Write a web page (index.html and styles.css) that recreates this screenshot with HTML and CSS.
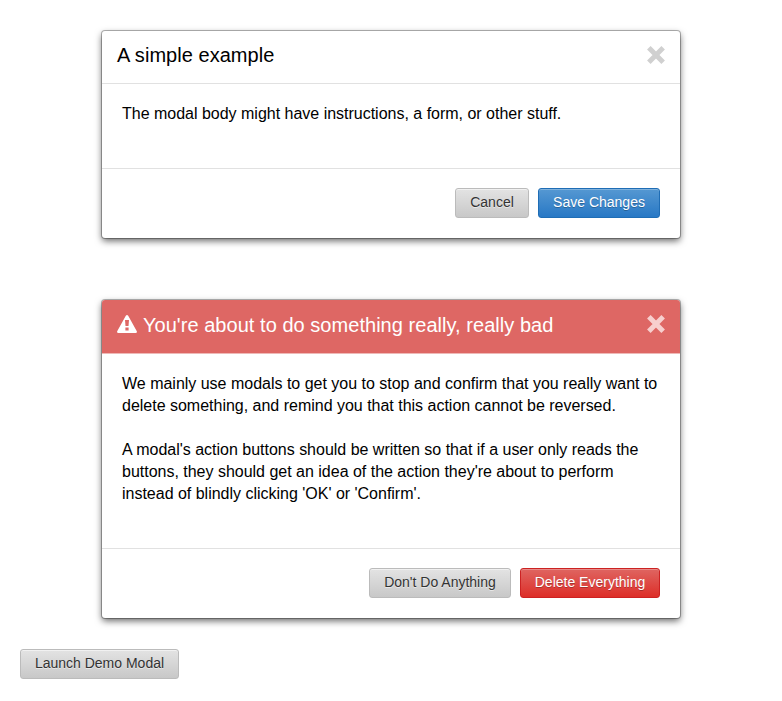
FILE: index.html
```
<!DOCTYPE html>
<html lang="en">
<head>
<meta charset="utf-8">
<title>Modals</title>
<link rel="stylesheet" href="styles.css">
</head>
<body>
<section class="modal">
  <header class="modal-header">
    <h2 class="title">A simple example</h2>
    <svg class="close" viewBox="0 0 18 18"><path d="M3.6 3.6L14.4 14.4M14.4 3.6L3.6 14.4"/></svg>
  </header>
  <div class="modal-body">
    <p>The modal body might have instructions, a form, or other stuff.</p>
  </div>
  <footer class="modal-footer">
    <button class="btn cancel">Cancel</button>
    <button class="btn primary">Save Changes</button>
  </footer>
</section>
<section class="modal danger">
  <header class="modal-header">
    <svg class="warning" viewBox="0 0 20 18"><path fill-rule="evenodd" d="M8.8.7Q10 -.6 11.2.7L19.8 16.3Q20.3 18 18.6 18H1.4Q-.3 18 .2 16.3ZM8 5L8.5 11H11.5L12 5ZM8.4 12.6V15.4H11.6V12.6Z"/></svg>
    <h2 class="title">You're about to do something really, really bad</h2>
    <svg class="close" viewBox="0 0 18 18"><path d="M3.6 3.6L14.4 14.4M14.4 3.6L3.6 14.4"/></svg>
  </header>
  <div class="modal-body">
    <p>We mainly use modals to get you to stop and confirm that you really want to<br>delete something, and remind you that this action cannot be reversed.</p>
    <p>A modal's action buttons should be written so that if a user only reads the<br>buttons, they should get an idea of the action they're about to perform<br>instead of blindly clicking 'OK' or 'Confirm'.</p>
  </div>
  <footer class="modal-footer">
    <button class="btn keep">Don't Do Anything</button>
    <button class="btn delete">Delete Everything</button>
  </footer>
</section>
<button class="btn launch">Launch Demo Modal</button>
</body>
</html>
```
FILE: styles.css
```
* { box-sizing: border-box; }
body {
  margin: 0;
  padding: 31px 20px 0;
  background: #fff;
  color: #000;
  font-family: "Liberation Sans", Arial, sans-serif;
}
.modal {
  width: 578px;
  margin: 0 0 62px 82px;
  background: #fff;
  border-radius: 3px;
  box-shadow: 0 0 0 1px rgba(0, 0, 0, .28), 0 3px 7px rgba(0, 0, 0, .6);
}
.modal-header {
  display: flex;
  align-items: center;
  height: 53px;
  padding: 0 15px 4px;
  border-bottom: 1px solid #e1e1e1;
  border-radius: 3px 3px 0 0;
}
.title {
  margin: 0;
  font-size: 20px;
  line-height: 24px;
  font-weight: 400;
  letter-spacing: .04px;
  white-space: nowrap;
}
.close {
  width: 18px;
  height: 18px;
  margin-left: auto;
  overflow: visible;
  stroke: #d0d0d0;
  stroke-width: 5;
  stroke-linecap: square;
}
.modal-body {
  height: 84px;
  padding: 19px 20px 0;
  font-size: 16px;
  line-height: 22px;
  letter-spacing: -.01px;
  white-space: nowrap;
}
.modal-body p { margin: 0 0 22px; }
.modal-footer {
  display: flex;
  justify-content: flex-end;
  gap: 9px;
  height: 70px;
  padding: 19px 20px 0;
  border-top: 1px solid #e1e1e1;
}
.btn {
  height: 30px;
  padding: 0 0 2px;
  border: 1px solid #bbb;
  border-radius: 3px;
  background: linear-gradient(#e3e3e3, #c8c8c8);
  box-shadow: inset 0 1px 0 rgba(255, 255, 255, .5);
  color: #333;
  font: 14px "Liberation Sans", Arial, sans-serif;
  text-shadow: 0 1px 0 rgba(255, 255, 255, .5);
  white-space: nowrap;
}
.cancel { width: 74px; }
.primary {
  width: 122px;
  border-color: #1f6db5;
  background: linear-gradient(#5598d2, #2878c5);
}
.primary, .delete {
  box-shadow: inset 0 1px 0 rgba(255, 255, 255, .25);
  color: #fff;
  text-shadow: 0 1px 0 rgba(0, 0, 0, .25);
}
.keep { width: 142px; }
.delete {
  width: 140px;
  border-color: #cc2222;
  background: linear-gradient(#df6561, #dd2e28);
}
.launch { display: block; width: 159px; }
.danger { margin-bottom: 31px; }
.danger .modal-header {
  height: 54px;
  background: #de6764;
  border-color: #eeb9b7;
  color: #fff;
}
.danger .modal-body { height: 194px; }
.danger .title {
  padding-top: 1px;
  line-height: 25px;
}
.danger .close {
  margin-bottom: 1px;
  stroke: #f7cfce;
}
.warning {
  width: 20px;
  height: 18px;
  margin: 0 6px 1px 0;
  fill: #fff;
}
```
